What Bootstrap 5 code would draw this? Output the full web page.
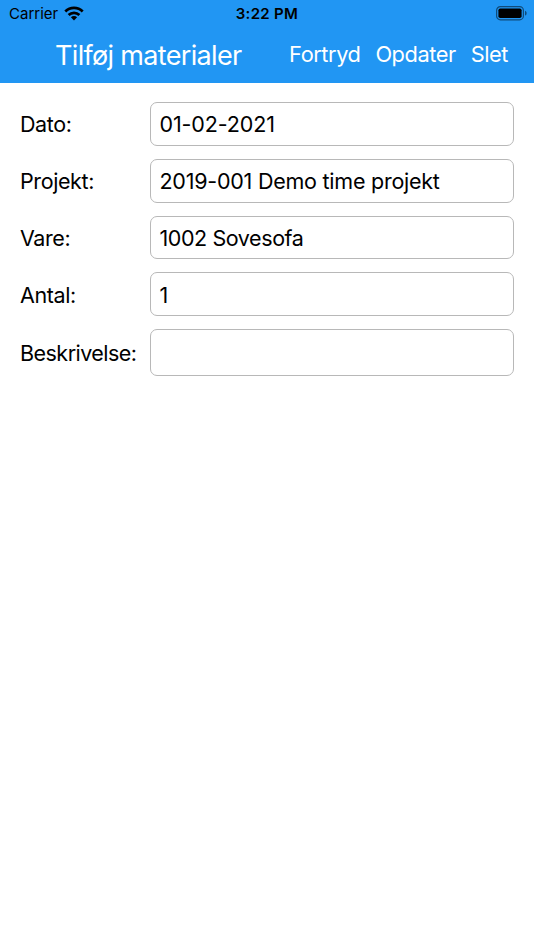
<!DOCTYPE html>
<html lang="da">
<head>
<meta charset="utf-8">
<meta name="viewport" content="width=device-width, initial-scale=1">
<title>Tilføj materialer</title>
<link href="https://cdn.jsdelivr.net/npm/bootstrap@5.3.0/dist/css/bootstrap.min.css" rel="stylesheet">
<style>
body{font-family:Inter,Roboto,sans-serif;color:#000;font-size:21.5px;line-height:26px}
.top-area{background:#2196f3;height:83px}
.status-bar{height:28px;font-size:15px;line-height:28px;padding:0 7px 0 9px;display:grid;grid-template-columns:1fr auto 1fr}
.clock{font-weight:600;letter-spacing:.3px;margin-right:2px}
.wifi{margin-left:5px}
.app-bar{height:55px;padding:0 26px 0 55px}
.app-title{font-size:27px;line-height:56px;letter-spacing:-.67px}
.app-bar .navbar-nav{gap:15px}
.app-bar .nav-link,.app-bar .nav-link:hover{color:#fff;padding:0;line-height:53px;font-size:21.8px;letter-spacing:-.45px}
.entry-form{padding:19px 20px 0 20px;gap:13px}
.entry-row{height:43.75px}
.entry-row.tall{height:46.5px}
.entry-row label{flex:0 0 130px;white-space:nowrap;letter-spacing:-.4px;padding-top:1px}
.entry-row.tall label{letter-spacing:-.53px}
.entry-row .form-control{height:100%;border:1.3px solid #b8b8b8;border-radius:7px;padding:1px 9px 0 8.5px;font-size:21.5px;color:#000;background:#fff;letter-spacing:-.24px}
.entry-row .date-value{letter-spacing:-.12px}
.entry-row .item-value{letter-spacing:-.42px}
</style>
</head>
<body>
<header class="top-area">
  <div class="status-bar">
    <div class="d-flex align-items-center"><span>Carrier</span>
      <svg class="wifi" width="22" height="16" viewBox="0 0 22 16" aria-hidden="true"><g fill="none" stroke="#000" stroke-width="2.7"><path d="M2.3 5.5a12.3 12.3 0 0 1 17.4 0"/><path d="M5.6 9a7.7 7.7 0 0 1 10.8 0"/></g><path d="M7.9 11.3a4.4 4.4 0 0 1 6.2 0L11 14.5z"/></svg>
    </div>
    <span class="clock">3:22 PM</span>
    <div class="d-flex align-items-center justify-content-end">
      <svg width="32" height="16" viewBox="0 0 32 16" aria-hidden="true"><rect x="1.6" y=".6" width="26.8" height="13.2" rx="3.8" fill="none" stroke="#104b7a" stroke-width="1.2"/><rect x="3.4" y="2.5" width="23.2" height="9.5" rx="1.8"/><path d="M30 4.8c2.2.8 2.2 4 0 4.8z" fill="#104b7a"/></svg>
    </div>
  </div>
  <nav class="app-bar d-flex justify-content-between align-items-start">
    <h1 class="app-title text-white fw-normal m-0">Tilføj materialer</h1>
    <div class="navbar-nav flex-row">
      <a class="nav-link" href="#">Fortryd</a><a class="nav-link" href="#">Opdater</a><a class="nav-link" href="#">Slet</a>
    </div>
  </nav>
</header>
<main class="entry-form d-flex flex-column">
  <div class="entry-row d-flex align-items-center"><label>Dato:</label><div class="form-control date-value d-flex align-items-center"><span>01-02-2021</span></div></div>
  <div class="entry-row d-flex align-items-center"><label>Projekt:</label><div class="form-control d-flex align-items-center"><span>2019-001 Demo time projekt</span></div></div>
  <div class="entry-row d-flex align-items-center"><label>Vare:</label><div class="form-control item-value d-flex align-items-center"><span>1002 Sovesofa</span></div></div>
  <div class="entry-row d-flex align-items-center"><label>Antal:</label><div class="form-control d-flex align-items-center"><span>1</span></div></div>
  <div class="entry-row tall d-flex align-items-center"><label>Beskrivelse:</label><div class="form-control"></div></div>
</main>
<script src="https://cdn.jsdelivr.net/npm/bootstrap@5.3.0/dist/js/bootstrap.bundle.min.js"></script>
</body>
</html>
